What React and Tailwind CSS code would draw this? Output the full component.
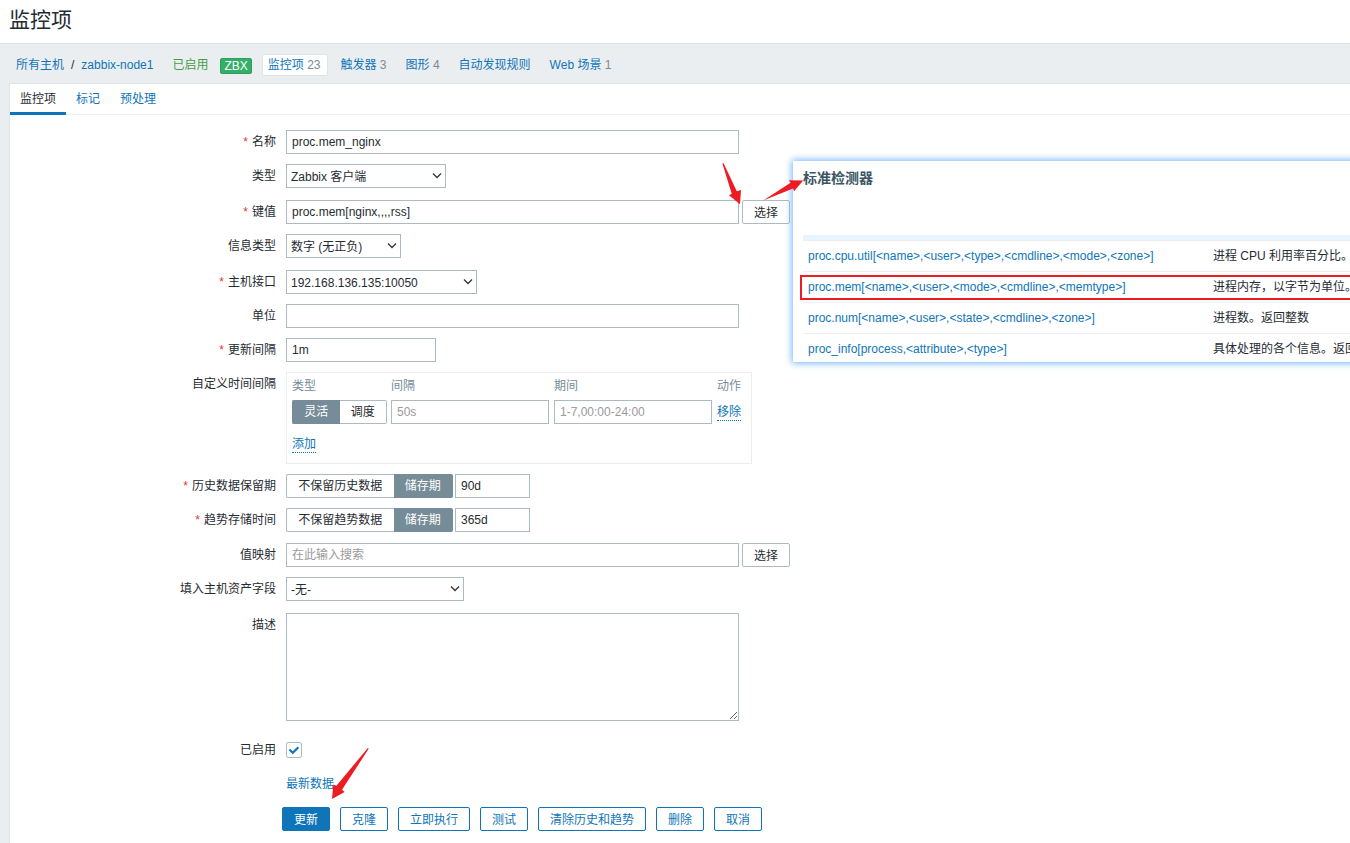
import { useState } from 'react';

const inputClass =
  'h-6 rounded-none border border-[#acbbc2] bg-white px-[5px] text-[#1f2c33] placeholder:text-[#9a9a9a] focus:border-[#0f75b8] focus:outline-none';

const navLinks = [
  { label: '监控项', count: 23, active: true },
  { label: '触发器', count: 3 },
  { label: '图形', count: 4 },
  { label: '自动发现规则' },
  { label: 'Web 场景', count: 1 },
];

const tabs = ['监控项', '标记', '预处理'];

const standardKeys = [
  { key: 'proc.cpu.util[<name>,<user>,<type>,<cmdline>,<mode>,<zone>]', description: '进程 CPU 利用率百分比。' },
  { key: 'proc.mem[<name>,<user>,<mode>,<cmdline>,<memtype>]', description: '进程内存，以字节为单位。' },
  { key: 'proc.num[<name>,<user>,<state>,<cmdline>,<zone>]', description: '进程数。返回整数' },
  { key: 'proc_info[process,<attribute>,<type>]', description: '具体处理的各个信息。返回' },
];

const actions = ['克隆', '立即执行', '测试', '清除历史和趋势', '删除', '取消'];

function Row({ label, htmlFor, required, children, className = 'min-h-6' }) {
  return (
    <div className={`flex items-start ${className}`}>
      <div className="w-[276px] shrink-0 pr-2.5 text-right leading-6">
        {label && (
          <label htmlFor={htmlFor}>
            {required && <span className="mr-1 text-[#e33734]">*</span>}
            {label}
          </label>
        )}
      </div>
      {children}
    </div>
  );
}

function Select({ id, options, className }) {
  return (
    <div className={`relative ${className}`}>
      <select
        id={id}
        className="h-6 w-full appearance-none rounded-none border border-[#acbbc2] bg-white pl-1 pr-5 pt-0.5 text-[#1f2c33] focus:border-[#0f75b8] focus:outline-none"
      >
        {options.map((option) => (
          <option key={option}>{option}</option>
        ))}
      </select>
      <svg className="pointer-events-none absolute right-1 top-2 h-2 w-2.5" viewBox="0 0 10 8" fill="none" stroke="#333" strokeWidth="1.3">
        <path d="M1 1.5l4 4 4-4" />
      </svg>
    </div>
  );
}

function Toggle({ name, label, options, defaultValue, className }) {
  const [value, setValue] = useState(defaultValue);

  return (
    <div role="radiogroup" aria-label={label} className={`relative flex h-6 ${className}`}>
      {options.map((option) => (
        <label
          key={option}
          className="flex grow cursor-pointer items-center justify-center whitespace-nowrap border-y border-[#acbbc2] px-[11px] first:rounded-l-xs first:border-l last:rounded-r-xs last:border-r has-checked:border-[#768d99] has-checked:bg-[#768d99] has-checked:text-white"
        >
          <input
            type="radio"
            name={name}
            value={option}
            checked={value === option}
            onChange={() => setValue(option)}
            className="sr-only"
          />
          {option}
        </label>
      ))}
    </div>
  );
}

function SelectButton() {
  return (
    <button type="button" className="ml-[3px] h-6 rounded-xs border border-[#acbbc2] bg-white px-[11px] pt-0.5 text-[#1f2c33] hover:bg-[#f2f4f5]">
      选择
    </button>
  );
}

function StandardKeysPopup() {
  return (
    <section className="absolute left-[793px] right-0 top-[161px] h-[201px] overflow-hidden bg-white pl-2.5">
      <h2 className="pt-2 text-[14px] font-bold leading-[18px] text-[#3c5563]">标准检测器</h2>
      <table className="mt-12 w-full min-w-[547px] table-fixed border-collapse">
        <colgroup>
          <col className="w-[406px]" />
          <col />
        </colgroup>
        <thead>
          <tr className="h-[5px] border-b border-[#ebeef0] bg-[#e8f5ff]">
            <th aria-label="键值" className="p-0" />
            <th aria-label="描述" className="p-0" />
          </tr>
        </thead>
        <tbody>
          {standardKeys.map((item) => (
            <tr key={item.key} className="h-[31px] border-b border-[#ebeef0]">
              <td className="whitespace-nowrap py-0 pl-[5px]">
                <a href="#" className="text-[#0f75b8] hover:underline">{item.key}</a>
              </td>
              <td className="whitespace-nowrap py-0 pl-1">{item.description}</td>
            </tr>
          ))}
        </tbody>
      </table>
    </section>
  );
}

function Arrows() {
  return (
    <>
      <svg className="pointer-events-none absolute left-[720px] top-[160px] h-12 w-[86px]" viewBox="720 160 86 48" fill="#ed1c24">
        <path d="M722.4 163.5L723.6 163.2L736.8 191.3L741 190L740 204.3L729 195.3L731.7 193.8Z" />
        <path d="M763.2 200.5L790.6 182.8L788.8 180.2L803.2 180.5L794 191.2L793 188.4Z" />
      </svg>
      <svg className="pointer-events-none absolute left-[330px] top-[745px] h-14 w-10" viewBox="330 745 40 56" fill="#ed1c24">
        <path d="M368.8 748.6L342 789.8L344.6 792L332 799L333.3 784.6L336.4 785.8L367.6 748.2Z" />
      </svg>
    </>
  );
}

export default function App() {
  const [activeTab, setActiveTab] = useState('监控项');
  const [enabled, setEnabled] = useState(true);

  return (
    <div className="relative flex min-h-screen flex-col overflow-hidden bg-[#ebeef0] font-['Liberation_Sans','Noto_Sans_CJK_SC',sans-serif] text-[12px] leading-[18px] text-[#1f2c33]">
      <header className="border-b border-[#dfe4e7] bg-white px-[9px] pb-[7px] pt-1">
        <h1 className="text-[21px] leading-8">监控项</h1>
      </header>

      <nav className="flex h-[39px] items-center whitespace-nowrap pl-4 pt-0.5">
        <a href="#" className="text-[#0f75b8]">所有主机</a>
        <span className="mx-[7px]">/</span>
        <a href="#" className="text-[#0f75b8]">zabbix-node1</a>
        <span className="ml-[19px] text-[#429e47]">已启用</span>
        <span className="ml-3 mt-0.5 rounded-xs border border-[#2f9f5e] bg-[#34af67] px-[3px] leading-[14px] text-white">ZBX</span>
        <ul className="ml-2.5 flex items-center gap-[7px]">
          {navLinks.map((link) => (
            <li
              key={link.label}
              className={link.active ? 'rounded-xs border border-[#dfe4e7] bg-white pl-[5px] pr-1.5 leading-5' : 'px-1.5 leading-5'}
            >
              <a href="#" className="text-[#0f75b8]">{link.label}</a>
              {link.count && <span className="text-[#768d99]"> {link.count}</span>}
            </li>
          ))}
        </ul>
      </nav>

      <main className="ml-[9px] grow border-l border-t border-[#dfe4e7] bg-white">
        <div role="tablist" className="flex h-[31px] border-b border-[#ebeef0]">
          {tabs.map((tab) => (
            <button
              key={tab}
              type="button"
              role="tab"
              aria-selected={activeTab === tab}
              onClick={() => setActiveTab(tab)}
              className={
                activeTab === tab
                  ? 'h-[31px] border-b-3 border-[#0f75b8] px-2.5 pt-0.5 text-[#1f2c33]'
                  : 'h-7 px-2.5 pt-0.5 text-[#0f75b8]'
              }
            >
              {tab}
            </button>
          ))}
        </div>

        <form className="pt-[15px]" onSubmit={(e) => e.preventDefault()}>
          <div className="flex flex-col gap-2.5">
            <Row label="名称" htmlFor="name" required>
              <input id="name" defaultValue="proc.mem_nginx" className={`${inputClass} w-[453px]`} />
            </Row>
            <Row label="类型" htmlFor="type" className="h-[26px]">
              <Select id="type" options={['Zabbix 客户端']} className="w-40" />
            </Row>
            <Row label="键值" htmlFor="key" required>
              <input id="key" defaultValue="proc.mem[nginx,,,,rss]" className={`${inputClass} w-[453px]`} />
              <SelectButton />
            </Row>
            <Row label="信息类型" htmlFor="value_type" className="h-[26px]">
              <Select id="value_type" options={['数字 (无正负)']} className="w-[115px]" />
            </Row>
            <Row label="主机接口" htmlFor="interface" required>
              <Select id="interface" options={['192.168.136.135:10050']} className="w-[191px]" />
            </Row>
            <Row label="单位" htmlFor="units">
              <input id="units" className={`${inputClass} w-[453px]`} />
            </Row>
            <Row label="更新间隔" htmlFor="delay" required>
              <input id="delay" defaultValue="1m" className={`${inputClass} w-[150px]`} />
            </Row>
            <Row label="自定义时间间隔">
              <div className="h-[92px] w-[466px] border border-[#ebeef0] px-[5px] pt-1">
                <table className="border-collapse">
                  <thead>
                    <tr className="h-[23px] text-left align-top text-[#768d99]">
                      <th className="p-0 font-normal">类型</th>
                      <th className="p-0 font-normal">间隔</th>
                      <th className="p-0 font-normal">期间</th>
                      <th className="p-0 font-normal">动作</th>
                    </tr>
                  </thead>
                  <tbody>
                    <tr>
                      <td className="py-0 pl-0 pr-1">
                        <Toggle name="delay_type" label="类型" options={['灵活', '调度']} defaultValue="灵活" className="w-[95px]" />
                      </td>
                      <td className="py-0 pl-0 pr-[5px]">
                        <input aria-label="间隔" placeholder="50s" className={`${inputClass} block w-[158px]`} />
                      </td>
                      <td className="py-0 pl-0 pr-[5px]">
                        <input aria-label="期间" placeholder="1-7,00:00-24:00" className={`${inputClass} block w-[158px]`} />
                      </td>
                      <td className="p-0">
                        <button type="button" className="block border-b border-dotted border-[#0f75b8] leading-4 text-[#0f75b8]">移除</button>
                      </td>
                    </tr>
                  </tbody>
                </table>
                <button type="button" className="mt-3 block border-b border-dotted border-[#0f75b8] leading-4 text-[#0f75b8]">添加</button>
              </div>
            </Row>
            <Row label="历史数据保留期" htmlFor="history" required>
              <Toggle name="history_mode" label="历史数据保留期" options={['不保留历史数据', '储存期']} defaultValue="储存期" className="w-[167px]" />
              <input id="history" defaultValue="90d" className={`${inputClass} ml-0.5 w-[75px]`} />
            </Row>
            <Row label="趋势存储时间" htmlFor="trends" required className="h-[25px]">
              <Toggle name="trends_mode" label="趋势存储时间" options={['不保留趋势数据', '储存期']} defaultValue="储存期" className="w-[167px]" />
              <input id="trends" defaultValue="365d" className={`${inputClass} ml-0.5 w-[75px]`} />
            </Row>
            <Row label="值映射" htmlFor="valuemap">
              <input id="valuemap" placeholder="在此输入搜索" className={`${inputClass} w-[453px]`} />
              <SelectButton />
            </Row>
            <Row label="填入主机资产字段" htmlFor="inventory" className="h-[26px]">
              <Select id="inventory" options={['-无-']} className="w-[178px]" />
            </Row>
            <Row label="描述" htmlFor="description" className="pb-[7px]">
              <textarea
                id="description"
                className="block h-[108px] w-[453px] resize rounded-none border border-[#acbbc2] p-[5px] focus:border-[#0f75b8] focus:outline-none"
              />
            </Row>
            <Row label="已启用" htmlFor="status">
              <div className="relative mt-1 h-4 w-4">
                <input
                  id="status"
                  type="checkbox"
                  checked={enabled}
                  onChange={(e) => setEnabled(e.target.checked)}
                  className="block h-4 w-4 appearance-none rounded-xs border border-[#acbbc2] bg-white"
                />
                {enabled && (
                  <svg className="pointer-events-none absolute inset-0" viewBox="0 0 16 16" fill="none" stroke="#0f75b8" strokeWidth="2.2">
                    <path d="M3.4 7.5l3.4 3.2 5.6-5.4" />
                  </svg>
                )}
              </div>
            </Row>
            <Row>
              <a href="#" className="leading-6 text-[#0f75b8]">最新数据</a>
            </Row>
          </div>

          <div className="mt-[11px] flex gap-2.5 pb-2.5 pl-[272px]">
            <button type="submit" className="h-6 rounded-xs border border-[#0f75b8] bg-[#0f75b8] px-[11px] pt-0.5 text-white">更新</button>
            {actions.map((action) => (
              <button
                key={action}
                type="button"
                className="h-6 whitespace-nowrap rounded-xs border border-[#0f75b8] bg-white px-[11px] pt-0.5 text-[#0f75b8] hover:bg-[#f2f9ff]"
              >
                {action}
              </button>
            ))}
          </div>
        </form>
      </main>

      <div className="pointer-events-none absolute left-[793px] right-[-10px] top-[161px] h-[201px] shadow-[0_0_7px_1px_#6fb0ff]" />
      <StandardKeysPopup />
      <div className="pointer-events-none absolute left-[800px] right-[-10px] top-[275px] h-[25px] border-2 border-[#ed1c24]" />
      <Arrows />
    </div>
  );
}
